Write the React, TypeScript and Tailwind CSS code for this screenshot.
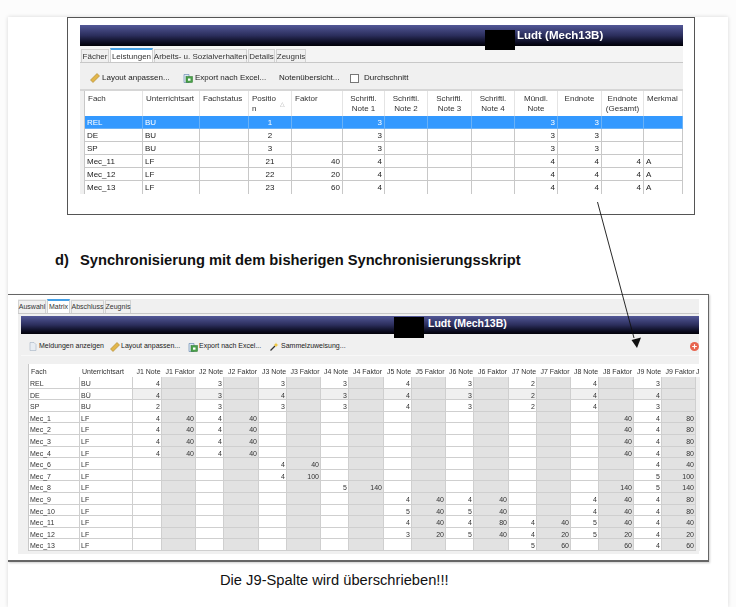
const font = "font-['Liberation_Sans',Arial,sans-serif]";

const RulerIcon = () => (
  <svg width="10" height="10" viewBox="0 0 10 10" className="shrink-0">
    <path d="M0.5 7 L7 0.5 L9.5 3 L3 9.5 Z" fill="#e2b64a" stroke="#a8842c" strokeWidth="0.6" />
  </svg>
);

const ExcelIcon = () => (
  <svg width="10" height="10" viewBox="0 0 10 10" className="shrink-0">
    <path d="M1 1.5 H6 V9.5 H1 Z" fill="#dfe9f5" stroke="#6f8fb5" strokeWidth="0.7" />
    <rect x="3" y="3.5" width="6.5" height="6" fill="#4aa04a" stroke="#2b742b" strokeWidth="0.5" />
    <rect x="5" y="5.5" width="2.5" height="2.2" fill="#ffffff" />
  </svg>
);

const DocIcon = () => (
  <svg width="8" height="9" viewBox="0 0 8 9" className="shrink-0">
    <path d="M1 0.5 H5 L7 2.5 V8.5 H1 Z" fill="#e8edf3" stroke="#a5b2c2" strokeWidth="0.6" />
  </svg>
);

const WandIcon = () => (
  <svg width="9" height="9" viewBox="0 0 9 9" className="shrink-0">
    <path d="M0.5 8.5 L5 4" stroke="#333333" strokeWidth="1.3" />
    <path d="M6 0.5 L6.7 2.3 L8.5 3 L6.7 3.7 L6 5.5 L5.3 3.7 L3.5 3 L5.3 2.3 Z" fill="#eec12e" />
  </svg>
);

const PlusBadge = () => (
  <svg width="9" height="9" viewBox="0 0 9 9" className="shrink-0">
    <circle cx="4.5" cy="4.5" r="4.5" fill="#e8654f" />
    <path d="M4.5 2.2 V6.8 M2.2 4.5 H6.8" stroke="#ffffff" strokeWidth="1.2" />
  </svg>
);

const Tab = ({ label, width, active }: { label: string; width: string; active?: boolean }) => (
  <div
    className={`${width} flex items-center justify-center whitespace-nowrap border border-b-0 border-[#d2d2d2] pt-[1px] ${
      active ? "h-[14px] border-t-2 border-t-[#45a0e6] bg-white" : "h-[13px] bg-[#f0f0f0]"
    }`}
  >
    {label}
  </div>
);

const TitleBar = ({ height, padLeft, boxLeft, boxTop, boxSize, textSize }: {
  height: string;
  padLeft: string;
  boxLeft: string;
  boxTop: string;
  boxSize: string;
  textSize: string;
}) => (
  <div
    className={`relative ${height} ${padLeft} ${textSize} flex items-center font-bold text-white bg-gradient-to-b from-[#535897] via-[#2b2e5c] to-[#020208]`}
  >
    Ludt (Mech13B)
    <div className={`absolute ${boxLeft} ${boxTop} ${boxSize} bg-black`} />
  </div>
);

const topHeaders = [
  "Fach",
  "Unterrichtsart",
  "Fachstatus",
  "Position",
  "Faktor",
  "Schriftl.\nNote 1",
  "Schriftl.\nNote 2",
  "Schriftl.\nNote 3",
  "Schriftl.\nNote 4",
  "Mündl.\nNote",
  "Endnote",
  "Endnote\n(Gesamt)",
  "Merkmal",
];

const topRows = [
  "REL,BU,,1,,3,,,,3,3,,",
  "DE,BU,,2,,3,,,,3,3,,",
  "SP,BU,,3,,3,,,,3,3,,",
  "Mec_11,LF,,21,40,4,,,,4,4,4,A",
  "Mec_12,LF,,22,20,4,,,,4,4,4,A",
  "Mec_13,LF,,23,60,4,,,,4,4,4,A",
].map((r) => r.split(","));

const TopTable = () => (
  <div className="bg-[#f0f0f0] pl-[4px]">
    <div className="grid w-[599px] grid-cols-[58px_57px_49px_43px_51px_42px_43px_44px_43px_43px_44px_42px_39px] border-l border-[#c8c8c8] bg-white">
      {topHeaders.map((h, i) => (
        <div
          key={h}
          className={`relative h-[25px] whitespace-pre-line border-r border-[#e4e4e4] pt-[3px] leading-[10px] text-[#333] ${
            i < 5 || i === 12 ? "pl-[3px] text-left" : "text-center"
          }`}
        >
          {i === 3 ? "Positio\nn" : h}
          {i === 3 && <span className="absolute right-[6px] top-[8px] text-[6px] text-[#aaa]">△</span>}
        </div>
      ))}
      {topRows.map((row, r) =>
        row.map((cell, c) => (
          <div
            key={`${r}-${c}`}
            className={`h-[13px] border-r px-[2px] leading-[13px] ${r < 5 ? "border-b" : ""} ${
              r === 0 ? "border-[#6ab2f7] bg-[#3399ff] text-white" : "border-[#c8c8c8] text-[#222]"
            } ${c < 2 || c === 12 ? "text-left" : c === 3 ? "text-center" : "text-right"}`}
          >
            {cell}
          </div>
        )),
      )}
    </div>
  </div>
);

const matrixHeaders = [
  "Fach",
  "Unterrichtsart",
  "J1 Note",
  "J1 Faktor",
  "J2 Note",
  "J2 Faktor",
  "J3 Note",
  "J3 Faktor",
  "J4 Note",
  "J4 Faktor",
  "J5 Note",
  "J5 Faktor",
  "J6 Note",
  "J6 Faktor",
  "J7 Note",
  "J7 Faktor",
  "J8 Note",
  "J8 Faktor",
  "J9 Note",
  "J9 Faktor",
];

const matrixRows = [
  "REL,BU,4,,3,,3,,3,,4,,3,,2,,4,,3,",
  "DE,BÜ,4,,3,,4,,3,,4,,3,,2,,4,,4,",
  "SP,BU,2,,3,,3,,3,,4,,3,,2,,4,,3,",
  "Mec_1,LF,4,40,4,40,,,,,,,,,,,,40,4,80",
  "Mec_2,LF,4,40,4,40,,,,,,,,,,,,40,4,80",
  "Mec_3,LF,4,40,4,40,,,,,,,,,,,,40,4,80",
  "Mec_4,LF,4,40,4,40,,,,,,,,,,,,40,4,80",
  "Mec_6,LF,,,,,4,40,,,,,,,,,,,4,40",
  "Mec_7,LF,,,,,4,100,,,,,,,,,,,5,100",
  "Mec_8,LF,,,,,,,5,140,,,,,,,,140,5,140",
  "Mec_9,LF,,,,,,,,,4,40,4,40,,,4,40,4,80",
  "Mec_10,LF,,,,,,,,,5,40,5,40,,,4,40,4,80",
  "Mec_11,LF,,,,,,,,,4,40,4,80,4,40,5,40,4,40",
  "Mec_12,LF,,,,,,,,,3,20,5,40,4,20,5,20,4,20",
  "Mec_13,LF,,,,,,,,,,,,,5,60,,60,4,60",
].map((r) => r.split(","));

const MatrixTable = () => (
  <div className="grid w-[671px] grid-cols-[51px_53px_29px_34px_28px_35px_28px_34px_28px_35px_28px_34px_28px_35px_28px_34px_28px_35px_28px_34px_4px] border-l border-[#c8c8c8] bg-white">
    {matrixHeaders.map((h) => (
      <div key={h} className="h-[13px] whitespace-nowrap pl-[2px] text-center leading-[15px] text-[#333] first:text-left [&:nth-child(2)]:text-left">
        {h}
      </div>
    ))}
    <div className="h-[13px] overflow-hidden leading-[15px] text-[#333]">J</div>
    {matrixRows.map((row, r) => (
      <div key={r} className="contents">
        {row.map((cell, c) => (
          <div
            key={c}
            className={`h-[11.6px] border-b border-r border-[#cfcfcf] px-[1px] leading-[13px] text-[#333] ${
              c < 2 ? "text-left" : "text-right"
            } ${c >= 2 && c % 2 === 1 ? "bg-[#e2e2e2]" : r === 1 && c >= 2 ? "bg-[#f0f0f0]" : "bg-white"}`}
          >
            {cell}
          </div>
        ))}
        <div className="h-[11.6px] bg-[#f0f0f0]" />
      </div>
    ))}
  </div>
);

export default function App() {
  return (
    <div className={`relative h-[607px] w-[736px] overflow-hidden bg-[#fcfcfc] pl-[8px] pt-[8px] text-black ${font}`}>
      <div className="h-[590px] w-[720px] bg-white shadow-[0_0_4px_rgba(0,0,0,0.15)]">
        {/* upper screenshot */}
        <div className="ml-[59px] mt-[9px] h-[198px] w-[628px] border border-[#555] pl-[12px] pt-[7px]">
          <div className="w-[603px] text-[8px] blur-[0.3px]">
            <TitleBar height="h-[21px] pt-[1px]" padLeft="pl-[437px]" boxLeft="left-[405px]" boxTop="top-[5px]" boxSize="h-[20px] w-[30px]" textSize="text-[11.5px]" />
            <div className="flex h-[17px] items-end gap-[1px] border-b border-[#c8c8c8] bg-[#f4f4f4] pl-[1px] text-[#333]">
              <Tab label="Fächer" width="w-[28px]" />
              <Tab label="Leistungen" width="w-[43px]" active />
              <Tab label="Arbeits- u. Sozialverhalten" width="w-[93px]" />
              <Tab label="Details" width="w-[27px]" />
              <Tab label="Zeugnis" width="w-[30px]" />
            </div>
            <div className="flex h-[28px] items-center border-b-2 border-[#d6d6d6] bg-[#f0f0f0] pl-[10px] pt-[4px] text-[#222]">
              <div className="flex w-[93px] items-center gap-[2px]">
                <RulerIcon />
                Layout anpassen...
              </div>
              <div className="flex w-[96px] items-center gap-[2px]">
                <ExcelIcon />
                Export nach Excel...
              </div>
              <div className="w-[71px]">Notenübersicht...</div>
              <div className="flex items-center gap-[5px]">
                <div className="size-[9px] border border-[#777] bg-white" />
                Durchschnitt
              </div>
            </div>
            <TopTable />
          </div>
        </div>

        <div className="ml-[47px] mt-[35px] flex h-[20px] items-center text-[14.7px] font-bold text-[#111]">
          <span className="w-[25px]">d)</span>
          <span>Synchronisierung mit dem bisherigen Synchronisierungsskript</span>
        </div>

        {/* lower screenshot */}
        <div className="mt-[24px] h-[268px] w-[701px] border-y border-r border-[#666] border-b-2 pl-[10px] pt-[4px] shadow-[1px_1px_2px_rgba(0,0,0,0.2)]">
          <div className="w-[681px] bg-[#f0f0f0] text-[7px] blur-[0.3px]">
            <div className="flex h-[15px] items-end gap-[1px] border-b border-[#c8c8c8] text-[#333]">
              <Tab label="Auswahl" width="w-[28px]" />
              <Tab label="Matrix" width="w-[23px]" active />
              <Tab label="Abschluss" width="w-[33px]" />
              <Tab label="Zeugnis" width="w-[26px]" />
            </div>
            <div className="pl-[3px] pt-[2px]">
              <TitleBar height="h-[18px] pb-[2px]" padLeft="pl-[407px]" boxLeft="left-[373px]" boxTop="top-[1px]" boxSize="h-[21px] w-[30px]" textSize="text-[10.5px]" />
              <div className="flex h-[22px] items-center border-b border-[#f8f8f8] pl-[8px] pt-[4px] text-[#222]">
                <div className="flex w-[81px] items-center gap-[2px]">
                  <DocIcon />
                  Meldungen anzeigen
                </div>
                <div className="flex w-[78px] items-center gap-[1px]">
                  <RulerIcon />
                  Layout anpassen...
                </div>
                <div className="flex w-[82px] items-center gap-[1px]">
                  <ExcelIcon />
                  Export nach Excel...
                </div>
                <div className="flex items-center gap-[2px]">
                  <WandIcon />
                  Sammelzuweisung...
                </div>
                <div className="ml-auto">
                  <PlusBadge />
                </div>
              </div>
              <div className="pb-[3px] pl-[7px] pt-[8px]">
                <MatrixTable />
              </div>
            </div>
          </div>
        </div>

        <div className="ml-[212px] mt-[8px] h-[20px] text-[14.7px] leading-[20px] text-[#111]">
          Die J9-Spalte wird überschrieben!!!
        </div>
      </div>

      {/* arrow between the two screenshots */}
      <svg viewBox="0 0 736 607" className="pointer-events-none absolute inset-0 h-[607px] w-[736px]">
        <path d="M597.5 202 L634 338" stroke="#111" strokeWidth="0.9" fill="none" />
        <path d="M637 348 L631.5 340 L641 337.5 Z" fill="#111" />
      </svg>
    </div>
  );
}
